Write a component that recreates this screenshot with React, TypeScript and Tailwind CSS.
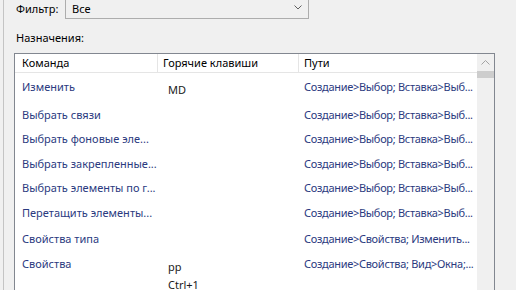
import React from 'react';

type Row = { cmd: string; keys: string[]; path: string; h: string };

const rows: Row[] = [
  { cmd: 'Изменить', keys: ['MD'], path: 'Создание>Выбор; Вставка>Выб...', h: 'h-[28px]' },
  { cmd: 'Выбрать связи', keys: [], path: 'Создание>Выбор; Вставка>Выб...', h: 'h-[24px]' },
  { cmd: 'Выбрать фоновые эле...', keys: [], path: 'Создание>Выбор; Вставка>Выб...', h: 'h-[25px]' },
  { cmd: 'Выбрать закрепленные...', keys: [], path: 'Создание>Выбор; Вставка>Выб...', h: 'h-[24px]' },
  { cmd: 'Выбрать элементы по г...', keys: [], path: 'Создание>Выбор; Вставка>Выб...', h: 'h-[25px]' },
  { cmd: 'Перетащить элементы...', keys: [], path: 'Создание>Выбор; Вставка>Выб...', h: 'h-[26px]' },
  { cmd: 'Свойства типа', keys: [], path: 'Создание>Свойства; Изменить...', h: 'h-[25px]' },
  { cmd: 'Свойства', keys: ['pp', 'Ctrl+1'], path: 'Создание>Свойства; Вид>Окна;...', h: 'h-[60px]' },
];

const App: React.FC = () => {
  return (
    <div
      className="flex h-[290px] w-[516px] overflow-hidden bg-[#f0f0f0] text-[11px] leading-[16px] text-black"
      style={{ fontFamily: '"Noto Sans", "DejaVu Sans", sans-serif' }}
    >
      {/* edge of the window behind */}
      <div className="w-[3px] shrink-0" />
      <div className="w-px shrink-0 bg-[#c4c4c4]" />

      <div className="flex w-[491px] shrink-0 flex-col pl-[10px]">
        {/* filter row */}
        <div className="mt-[-2px] flex h-[21px] items-center">
          <span className="ml-[2px] w-[49px]">Фильтр:</span>
          <div className="flex h-[21px] w-[244px] items-center justify-between border border-[#adadad] bg-[#f0f0f0] pl-[6px] pr-[6px]">
            <span>Все</span>
            <svg width="8" height="5" viewBox="0 0 8 5" className="mt-[-2px]">
              <polyline points="0.5,0.5 4,4 7.5,0.5" fill="none" stroke="#606060" strokeWidth="1" />
            </svg>
          </div>
        </div>

        <div className="ml-[2px] mt-[11px]">Назначения:</div>

        {/* list */}
        <div className="mt-[7px] flex flex-1 border border-[#828790] bg-white">
          <div className="flex min-w-0 flex-1 flex-col">
            <div className="flex h-[19px] shrink-0 border-b border-[#e5e5e5]">
              <div className="w-[143px] border-r border-[#e5e5e5] pl-[7px] leading-[18px]">Команда</div>
              <div className="w-[141px] border-r border-[#e5e5e5] pl-[5px] leading-[18px]">Горячие клавиши</div>
              <div className="flex-1 pl-[5px] leading-[18px]">Пути</div>
            </div>
            {rows.map((r, i) => (
              <div key={i} className={`flex shrink-0 ${r.h}`}>
                <div className="w-[144px] overflow-hidden whitespace-nowrap pl-[7px] pt-[6px] text-[#2b3a80]">
                  {r.cmd}
                </div>
                <div className="flex w-[141px] flex-col pl-[9px] pt-[8px] leading-[18px] text-[#1a1a1a]">
                  {r.keys.map((k) => (
                    <span key={k} className="h-[18px] leading-[18px]">
                      {k}
                    </span>
                  ))}
                </div>
                <div className="min-w-0 flex-1 whitespace-nowrap pl-[4px] pt-[6px] tracking-[-0.3px] text-[#2b3a80]">
                  {r.path}
                </div>
              </div>
            ))}
          </div>

          {/* scrollbar */}
          <div className="flex w-[17px] shrink-0 flex-col bg-[#f0f0f0]">
            <div className="flex h-[17px] items-center justify-center">
              <svg width="9" height="5" viewBox="0 0 9 5">
                <polyline points="0.5,4.5 4.5,0.5 8.5,4.5" fill="none" stroke="#a3a3a3" strokeWidth="1" />
              </svg>
            </div>
            <div className="h-[7px] bg-[#cdcdcd]" />
          </div>
        </div>
      </div>
    </div>
  );
};

export default App;
